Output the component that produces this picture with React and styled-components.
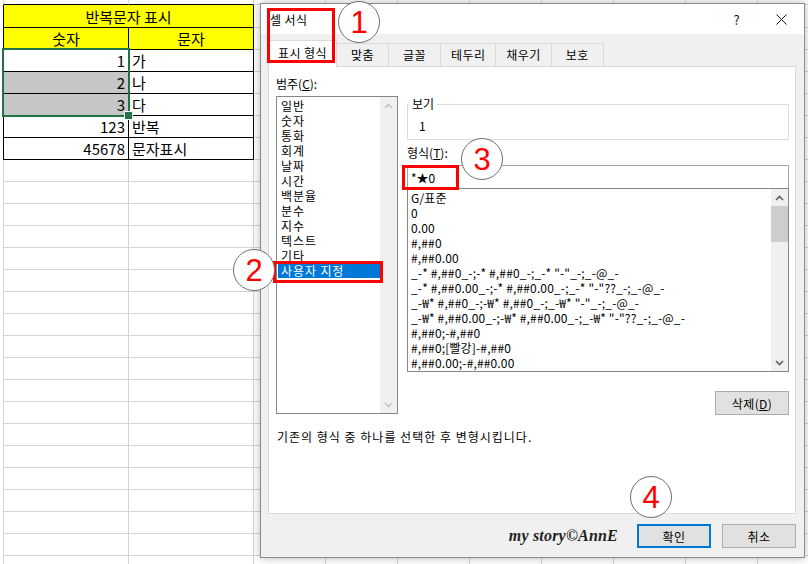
import React from 'react';
import styled, { createGlobalStyle } from 'styled-components';

const GlobalStyle = createGlobalStyle`
  html, body {
    margin: 0;
    padding: 0;
    background: #fff;
  }
  body {
    font-family: "Noto Sans CJK KR", "Noto Sans", sans-serif;
  }
  * {
    box-sizing: border-box;
  }
`;

const Screen = styled.div`
  position: relative;
  width: 808px;
  height: 564px;
  overflow: hidden;
  background: #fff;
`;

/* ---------- spreadsheet behind the dialog ---------- */

const Sheet = styled.div`
  display: grid;
  grid-template-columns: 126px 125px repeat(8, 72px);
  grid-template-rows: 5px 23px;
  grid-auto-rows: 22px;
  padding-left: 3px;
  font-family: "Noto Sans CJK KR", sans-serif;
  font-size: 15px;
  color: #000;
`;

const Cell = styled.div`
  grid-column: span ${(p) => p.$span || 1};
  display: flex;
  align-items: center;
  justify-content: ${(p) =>
    p.$align === 'right' ? 'flex-end' : p.$align === 'center' ? 'center' : 'flex-start'};
  padding: 0 3px;
  background: ${(p) => p.$fill || 'transparent'};
  border-right: 1px solid ${(p) => (p.$edge ? '#000' : '#d4d4d4')};
  border-bottom: 1px solid ${(p) => (p.$edge || p.$cap ? '#000' : '#d4d4d4')};
  border-left: ${(p) => (p.$first ? `1px solid ${p.$edge ? '#000' : '#d4d4d4'}` : 'none')};
  line-height: 1;
  white-space: nowrap;
  overflow: hidden;
`;

const Selection = styled.div`
  position: absolute;
  left: 2px;
  top: 48px;
  width: 128px;
  height: 69px;
  border: 2px solid #217346;
  pointer-events: none;

  &::after {
    content: '';
    position: absolute;
    right: -5px;
    bottom: -5px;
    width: 7px;
    height: 7px;
    background: #217346;
    border: 1px solid #fff;
  }
`;

/* ---------- dialog ---------- */

const Dialog = styled.div`
  position: absolute;
  z-index: 0;
  left: 260px;
  top: 3px;
  width: 545px;
  height: 555px;
  display: flex;
  flex-direction: column;
  background: #f0f0f0;
  border: 1px solid #8c8c8c;
  box-shadow: 0 0 9px rgba(0, 0, 0, 0.28);
  font-family: "Noto Sans CJK KR", sans-serif;
  font-size: 12px;
  color: #000;
`;

const TitleBar = styled.div`
  height: 30px;
  display: flex;
  align-items: center;
  background: #fff;
  padding-left: 9px;
`;

const Title = styled.span`
  flex: 1;
  letter-spacing: 0.4px;
`;

const TitleButton = styled.div`
  width: 45px;
  height: 30px;
  display: flex;
  align-items: center;
  justify-content: center;
  font-size: 13px;
  color: #111;
`;

const Body = styled.div`
  flex: 1;
  display: flex;
  flex-direction: column;
  padding: 6px 8px 0 7px;
`;

const TabStrip = styled.div`
  display: flex;
  align-items: flex-end;
  height: 27px;
  margin-bottom: -1px;
  position: relative;
  z-index: 1;
`;

const Tab = styled.div`
  height: ${(p) => (p.$active ? 27 : 24)}px;
  min-width: ${(p) => (p.$active ? 69 : 53)}px;
  padding: ${(p) => (p.$active ? '0 0 3px' : '0 10px 1px')};
  margin-left: ${(p) => (p.$first ? 0 : -1)}px;
  display: flex;
  align-items: center;
  justify-content: center;
  letter-spacing: 0.4px;
  background: ${(p) => (p.$active ? '#fff' : '#f0f0f0')};
  border: 1px solid #d9d9d9;
  border-bottom-color: ${(p) => (p.$active ? '#fff' : '#d9d9d9')};
`;

const Panel = styled.div`
  height: 448px;
  display: flex;
  flex-direction: column;
  background: #fff;
  border: 1px solid #d9d9d9;
  padding: 8px 6px 0 7px;
`;

const Columns = styled.div`
  display: flex;
  gap: 9px;
`;

const CategoryColumn = styled.div`
  width: 122px;
  display: flex;
  flex-direction: column;
`;

const FormatColumn = styled.div`
  flex: 1;
  display: flex;
  flex-direction: column;
  padding-top: 20px;
`;

const FieldLabel = styled.div`
  height: 18px;
  line-height: 18px;
  margin-top: ${(p) => p.$gap || 0}px;
`;

const ListBox = styled.div`
  display: flex;
  height: ${(p) => p.$height}px;
  margin-top: ${(p) => p.$gap || 0}px;
  border: 1px solid #828790;
  background: #fff;
`;

const ListItems = styled.div`
  flex: 1;
  padding: ${(p) => (p.$tight ? '1px 0 0 1px' : '1px 0 0 0')};
  overflow: hidden;
  letter-spacing: ${(p) => (p.$tight ? '0.9px' : '0.15px')};
`;

const ListItem = styled.div`
  height: 15px;
  line-height: 15px;
  padding-left: 3px;
  white-space: nowrap;
  background: ${(p) => (p.$selected ? '#0078d7' : 'transparent')};
  color: ${(p) => (p.$selected ? '#fff' : '#000')};
`;

const ScrollTrack = styled.div`
  width: 17px;
  flex: none;
  display: flex;
  flex-direction: column;
  background: #f0f0f0;
`;

const ScrollArrow = styled.div`
  height: 17px;
  display: flex;
  align-items: center;
  justify-content: center;
  color: ${(p) => (p.$disabled ? '#c4c4c4' : '#606060')};
`;

const ScrollThumb = styled.div`
  height: 36px;
  background: #cdcdcd;
`;

const ScrollSpacer = styled.div`
  flex: 1;
`;

const GroupBox = styled.fieldset`
  margin: 0;
  height: 45px;
  padding: 0 0 0 11px;
  border: 1px solid #dcdcdc;
  min-width: 0;
`;

const GroupLegend = styled.legend`
  padding: 0 3px;
  margin-left: -10px;
  line-height: 18px;
`;

const PreviewValue = styled.div`
  line-height: 18px;
  margin-top: 4px;
`;

const FormatInput = styled.div`
  height: 23px;
  margin-top: 3px;
  padding-left: 3px;
  display: flex;
  align-items: center;
  border: 1px solid #a5a5a5;
  border-bottom: none;
`;

const ButtonRow = styled.div`
  display: flex;
  justify-content: flex-end;
  margin-top: 19px;
`;

const Button = styled.div`
  width: ${(p) => p.$width || 74}px;
  height: 24px;
  display: flex;
  align-items: center;
  justify-content: center;
  letter-spacing: 0.4px;
  background: #e1e1e1;
  border: ${(p) => (p.$primary ? '2px solid #0078d7' : '1px solid #adadad')};
`;

const Hint = styled.div`
  margin-top: 14px;
  line-height: 16px;
  padding-left: 1px;
  letter-spacing: 1px;
`;

const Footer = styled.div`
  display: flex;
  justify-content: flex-end;
  align-items: center;
  gap: 11px;
  margin-top: 10px;
`;

const Watermark = styled.span`
  font-family: "Liberation Serif", "DejaVu Serif", serif;
  font-style: italic;
  font-weight: bold;
  font-size: 16px;
  color: #222;
  margin-right: 8px;
  letter-spacing: 0.2px;
`;

/* ---------- annotations drawn over the screenshot ---------- */

const RedBox = styled.div`
  position: absolute;
  z-index: 2;
  border: 3px solid #ff0000;
  pointer-events: none;
`;

const Marker = styled.div`
  position: absolute;
  z-index: 3;
  width: 42px;
  height: 42px;
  border-radius: 50%;
  border: 1px solid #707070;
  background: #fff;
  display: flex;
  align-items: center;
  justify-content: center;
  font-family: "Liberation Sans", Arial, sans-serif;
  font-size: 31px;
  color: #ff0000;
  line-height: 1;
`;

const CATEGORIES = ['일반', '숫자', '통화', '회계', '날짜', '시간', '백분율', '분수', '지수', '텍스트', '기타', '사용자 지정'];

const FORMATS = [
  'G/표준',
  '0',
  '0.00',
  '#,##0',
  '#,##0.00',
  '_-* #,##0_-;-* #,##0_-;_-* "-"_-;_-@_-',
  '_-* #,##0.00_-;-* #,##0.00_-;_-* "-"??_-;_-@_-',
  '_-₩* #,##0_-;-₩* #,##0_-;_-₩* "-"_-;_-@_-',
  '_-₩* #,##0.00_-;-₩* #,##0.00_-;_-₩* "-"??_-;_-@_-',
  '#,##0;-#,##0',
  '#,##0;[빨강]-#,##0',
  '#,##0.00;-#,##0.00',
];

const TABS = ['표시 형식', '맞춤', '글꼴', '테두리', '채우기', '보호'];

const DATA = [
  [1, '가', null],
  [2, '나', '#c6c6c6'],
  [3, '다', '#c6c6c6'],
  [123, '반복', null],
  [45678, '문자표시', null],
];

const EXTRA_COLS = 8;
const BLANK_ROWS = 19;

const MARKERS = [
  { n: 1, left: 338, top: 1 },
  { n: 2, left: 233, top: 249 },
  { n: 3, left: 461, top: 138 },
  { n: 4, left: 630, top: 476 },
];

const BOXES = [
  { left: 267, top: 8, width: 68, height: 55 },
  { left: 273, top: 261, width: 110, height: 22 },
  { left: 402, top: 165, width: 57, height: 25 },
];

function Chevron({ down }) {
  return (
    <svg width="9" height="6" viewBox="0 0 9 6">
      <path
        d={down ? 'M1 1 L4.5 4.5 L8 1' : 'M1 5 L4.5 1.5 L8 5'}
        fill="none"
        stroke="currentColor"
        strokeWidth="1.6"
      />
    </svg>
  );
}

function CloseIcon() {
  return (
    <svg width="11" height="11" viewBox="0 0 11 11">
      <path d="M0.5 0.5 L10.5 10.5 M10.5 0.5 L0.5 10.5" stroke="#111" strokeWidth="1" />
    </svg>
  );
}

function extras(prefix) {
  return Array.from({ length: EXTRA_COLS }, (_, i) => <Cell key={`${prefix}-x${i}`} />);
}

function SheetGrid() {
  const cells = [];

  cells.push(<Cell key="cap-a" $first $cap />, <Cell key="cap-b" $cap />, ...extras('cap'));

  cells.push(
    <Cell key="title" $first $edge $span={2} $fill="#ffff00" $align="center">
      반복문자 표시
    </Cell>,
    ...extras('title')
  );

  cells.push(
    <Cell key="h-a" $first $edge $fill="#ffff00" $align="center">
      숫자
    </Cell>,
    <Cell key="h-b" $edge $fill="#ffff00" $align="center">
      문자
    </Cell>,
    ...extras('head')
  );

  DATA.forEach(([num, text, fill], i) => {
    cells.push(
      <Cell key={`n${i}`} $first $edge $fill={fill} $align="right">
        {num}
      </Cell>,
      <Cell key={`t${i}`} $edge>
        {text}
      </Cell>,
      ...extras(`d${i}`)
    );
  });

  for (let r = 0; r < BLANK_ROWS; r++) {
    cells.push(<Cell key={`b${r}-a`} $first />, <Cell key={`b${r}-b`} />, ...extras(`b${r}`));
  }

  return <Sheet>{cells}</Sheet>;
}

function FormatDialog() {
  return (
    <Dialog>
      <TitleBar>
        <Title>셀 서식</Title>
        <TitleButton>?</TitleButton>
        <TitleButton>
          <CloseIcon />
        </TitleButton>
      </TitleBar>

      <Body>
        <TabStrip>
          {TABS.map((t, i) => (
            <Tab key={t} $active={i === 0} $first={i === 0}>
              {t}
            </Tab>
          ))}
        </TabStrip>

        <Panel>
          <Columns>
            <CategoryColumn>
              <FieldLabel>
                범주(<u>C</u>):
              </FieldLabel>
              <ListBox $height={318} $gap={3}>
                <ListItems $tight>
                  {CATEGORIES.map((c, i) => (
                    <ListItem key={c} $selected={i === CATEGORIES.length - 1}>
                      {c}
                    </ListItem>
                  ))}
                </ListItems>
                <ScrollTrack>
                  <ScrollArrow $disabled>
                    <Chevron />
                  </ScrollArrow>
                  <ScrollSpacer />
                  <ScrollArrow $disabled>
                    <Chevron down />
                  </ScrollArrow>
                </ScrollTrack>
              </ListBox>
            </CategoryColumn>

            <FormatColumn>
              <GroupBox>
                <GroupLegend>보기</GroupLegend>
                <PreviewValue>1</PreviewValue>
              </GroupBox>

              <FieldLabel $gap={4}>
                형식(<u>T</u>):
              </FieldLabel>
              <FormatInput>*★0</FormatInput>
              <ListBox $height={184}>
                <ListItems>
                  {FORMATS.map((f) => (
                    <ListItem key={f}>{f}</ListItem>
                  ))}
                </ListItems>
                <ScrollTrack>
                  <ScrollArrow>
                    <Chevron />
                  </ScrollArrow>
                  <ScrollThumb />
                  <ScrollSpacer />
                  <ScrollArrow>
                    <Chevron down />
                  </ScrollArrow>
                </ScrollTrack>
              </ListBox>

              <ButtonRow>
                <Button>
                  삭제(<u>D</u>)
                </Button>
              </ButtonRow>
            </FormatColumn>
          </Columns>

          <Hint>기존의 형식 중 하나를 선택한 후 변형시킵니다.</Hint>
        </Panel>

        <Footer>
          <Watermark>my story©AnnE</Watermark>
          <Button $primary>확인</Button>
          <Button>취소</Button>
        </Footer>
      </Body>
    </Dialog>
  );
}

export default function App() {
  return (
    <>
      <GlobalStyle />
      <Screen>
        <SheetGrid />
        <Selection />
        <FormatDialog />
        {BOXES.map((b, i) => (
          <RedBox key={i} style={{ left: b.left, top: b.top, width: b.width, height: b.height }} />
        ))}
        {MARKERS.map((m) => (
          <Marker key={m.n} style={{ left: m.left, top: m.top }}>
            {m.n}
          </Marker>
        ))}
      </Screen>
    </>
  );
}
